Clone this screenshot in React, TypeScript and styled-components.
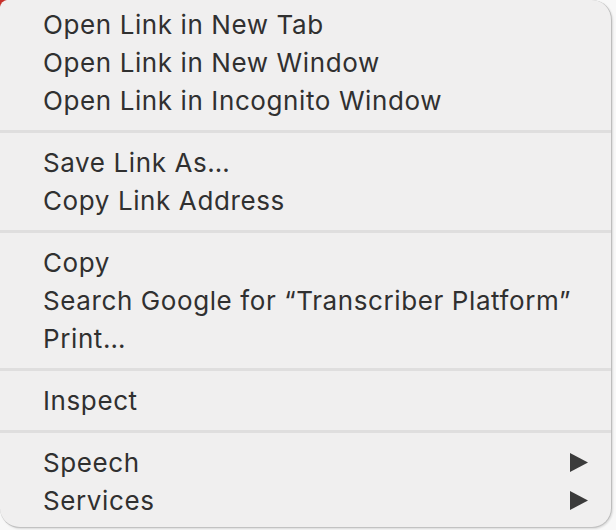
import React from 'react';
import styled, { createGlobalStyle } from 'styled-components';

const GlobalStyle = createGlobalStyle`
	html, body {
		margin: 0;
		padding: 0;
		width: 616px;
		height: 530px;
		overflow: hidden;
		background:
			radial-gradient(circle at 0 0, #c7302a 0, #c7302a 6px, transparent 7px),
			#f8f8f8;
	}
`;

type Item = { label: string; submenu?: boolean };

const groups: Item[][] = [
	[
		{ label: 'Open Link in New Tab' },
		{ label: 'Open Link in New Window' },
		{ label: 'Open Link in Incognito Window' },
	],
	[{ label: 'Save Link As…' }, { label: 'Copy Link Address' }],
	[
		{ label: 'Copy' },
		{ label: 'Search Google for \u201CTranscriber Platform\u201D' },
		{ label: 'Print…' },
	],
	[{ label: 'Inspect' }],
	[
		{ label: 'Speech', submenu: true },
		{ label: 'Services', submenu: true },
	],
];

function Arrow() {
	return (
		<ArrowIcon width="18" height="19" viewBox="0 0 18 19">
			<polygon points="0,0 18,9.5 0,19" fill="#3b3b3b" />
		</ArrowIcon>
	);
}

export default function App() {
	return (
		<>
			<GlobalStyle />
			<Page>
				<Menu>
					{groups.map((group, gi) => (
						<React.Fragment key={gi}>
							{gi > 0 && <Separator />}
							{group.map((item) => (
								<Row key={item.label}>
									<Label>{item.label}</Label>
									{item.submenu && <Arrow />}
								</Row>
							))}
						</React.Fragment>
					))}
				</Menu>
			</Page>
		</>
	);
}

const Page = styled.div`
	display: flex;
	width: 616px;
	height: 530px;
`;

const Menu = styled.div`
	display: flex;
	flex-direction: column;
	box-sizing: border-box;
	width: 612px;
	height: 528px;
	padding: 5px 0 8px;
	background: #f0efef;
	border-right: 1px solid #bdbdbd;
	border-bottom: 1px solid #c2c2c2;
	border-radius: 8px 20px 20px 20px;
	box-shadow: 1px 1px 2px rgba(0, 0, 0, 0.12);
`;

const Row = styled.div`
	display: flex;
	align-items: center;
	justify-content: space-between;
	height: 38px;
	padding: 0 23px 0 43px;
`;

const Label = styled.span`
	font-family: 'Inter', 'Noto Sans', sans-serif;
	font-size: 26px;
	color: #303030;
	white-space: nowrap;
	letter-spacing: 0.6px;
`;

const ArrowIcon = styled.svg`
	display: block;
	flex: none;
`;

const Separator = styled.div`
	height: 3px;
	margin: 11px 0 10px;
	background: #dfdede;
`;
